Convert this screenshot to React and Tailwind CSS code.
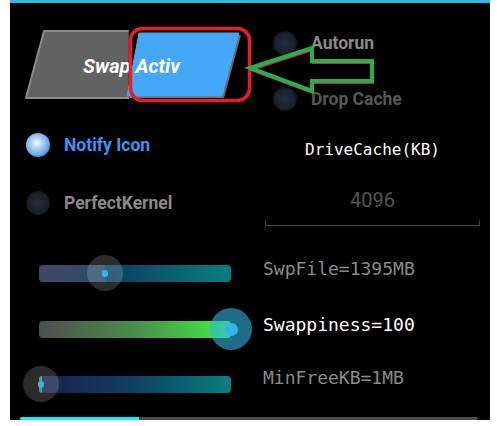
import React from "react";

const sans = "font-['Roboto',sans-serif]";
const mono = "font-['DejaVu_Sans_Mono',monospace]";

function Radio({ on, label, dim }) {
  return (
    <div className="flex items-center gap-[14px] h-6">
      {on ? (
        <div className="w-6 h-6 rounded-full bg-[radial-gradient(circle_at_45%_42%,#ffffff_0%,#b4d8fa_25%,#6aaaf0_60%,#2c5d9a_88%,#000_100%)]" />
      ) : (
        <div className="w-6 h-6 rounded-full bg-[radial-gradient(circle,#222b3a_0%,#1a2230_55%,#0b0e14_85%,#000_100%)]" />
      )}
      <span
        className={`${sans} font-bold text-[17.5px] leading-6 ${
          on ? "text-[#3a96f2]" : dim ? "text-[#575757]" : "text-[#8a8a8a]"
        }`}
      >
        {label}
      </span>
    </div>
  );
}

function SwapToggle() {
  return (
    <svg width="240" height="80" viewBox="10 24 240 80" className="mt-[21px]">
      <defs>
        <clipPath id="leftHalf">
          <rect x="0" y="0" width="129" height="120" />
        </clipPath>
      </defs>
      <polygon
        points="44,31 152,31 134,98 26,98"
        fill="#626262"
        stroke="#8a8a8a"
        strokeWidth="2"
        strokeLinejoin="round"
        clipPath="url(#leftHalf)"
      />
      <polygon points="141,35 241,35 224,98 129,98" fill="#6b6b6b" strokeLinejoin="round" />
      <polygon
        points="139,33 239,33 222,96 127,96"
        fill="#45a7f7"
        stroke="#45a7f7"
        strokeWidth="1"
        strokeLinejoin="round"
      />
      <line x1="129.5" y1="31" x2="129.5" y2="86" stroke="#000" strokeWidth="1.5" />
      <text
        x="83"
        y="73"
        fill="#fff"
        fontFamily="Roboto, sans-serif"
        fontWeight="700"
        fontStyle="italic"
        fontSize="20"
      >
        Swap Activ
      </text>
    </svg>
  );
}

function Slider({ track, pos, big, label, labelColor, height, lift, fill }) {
  return (
    <div className={`flex items-center ${height}`}>
      <div className={`relative ml-[29px] w-[192px] h-[17px] rounded-[4px] ${track}`}>
        {fill}
        <div
          className={`absolute top-1/2 -translate-x-1/2 -translate-y-1/2 rounded-full flex items-center justify-center ${
            big ? "w-[42px] h-[42px] bg-[#33b5e5]/60" : "w-9 h-9 bg-white/[0.17]"
          }`}
          style={{ left: pos }}
        >
          <div
            className={`rounded-full bg-[#35b5e5] ${big ? "w-[13px] h-[13px]" : "w-[6px] h-[7px]"}`}
          />
        </div>
      </div>
      <span className={`${mono} ml-[32px] text-[18px] leading-6 ${lift} ${labelColor}`}>{label}</span>
    </div>
  );
}

export default function App() {
  return (
    <div className="relative w-[497px] h-[426px] bg-white overflow-hidden">
      <div className="ml-[10px] w-[480px] h-[420px] bg-black flex flex-col">
        <div className="h-[3px] bg-[#33b5e5]" />

        <div className="grid grid-cols-[250px_230px] h-[242px]">
          <div className="flex flex-col">
            <SwapToggle />
            <div className="mt-[29px] pl-[16px]">
              <Radio on label="Notify Icon" />
            </div>
            <div className="mt-[34px] pl-[16px]">
              <Radio label="PerfectKernel" />
            </div>
          </div>

          <div className="flex flex-col">
            <div className="mt-[28px] pl-[13px]">
              <Radio label="Autorun" />
            </div>
            <div className="mt-[32px] pl-[13px]">
              <Radio label="Drop Cache" dim />
            </div>
            <div className="ml-[5px] w-[215px] flex flex-col items-center">
              <div className={`${mono} mt-[29px] text-[16px] leading-[20px] text-white`}>
                DriveCache(KB)
              </div>
              <div className={`${sans} mt-[28px] text-[20px] leading-6 text-[#555]`}>4096</div>
              <div className="mt-[8px] w-full h-[6px] border-x border-b border-[#444]" />
            </div>
          </div>
        </div>

        <Slider
          height="h-[56px]"
          track="bg-[linear-gradient(to_right,#38385a,#0e3f64_40%,#087f80)]"
          fill={<div className="absolute left-0 top-0 h-full w-[66px] rounded-l-[4px] bg-white/[0.07]" />}
          pos="66px"
          lift="mb-[8px]"
          label="SwpFile=1395MB"
          labelColor="text-[#8a8a8a]"
        />
        <Slider
          height="h-[56px]"
          track="bg-[linear-gradient(to_right,#4e4e4e,#4a8d4a_50%,#40f040)]"
          pos="192px"
          big
          lift="mb-[8px]"
          label="Swappiness=100"
          labelColor="text-white"
        />
        <Slider
          height="h-[54px]"
          track="bg-[linear-gradient(to_right,#1a1f50,#0e4066_50%,#087f80)]"
          fill={<div className="absolute left-0 top-0 h-full w-[3px] rounded-l-[4px] bg-[#3a8a3a]" />}
          pos="2px"
          lift="mb-[12px]"
          label="MinFreeKB=1MB"
          labelColor="text-[#8a8a8a]"
        />

        <div className="mt-[6px] ml-[10px] w-[458px] h-[3px] flex">
          <div className="w-[119px] bg-[#00f6ff] rounded-l-[2px]" />
          <div className="flex-1 bg-[#4a4a4a] rounded-r-[2px]" />
        </div>
      </div>

      <svg className="absolute inset-0 pointer-events-none" width="497" height="426">
        <rect x="130.5" y="28.5" width="119" height="72" rx="12" fill="none" stroke="#ec1c24" strokeWidth="3.5" />
        <path
          d="M251,70 L313,50 L313,63 L373,63 L373,83 L313,83 L313,93 Z"
          fill="none"
          stroke="#ec1c24"
          strokeWidth="2"
          strokeLinejoin="miter"
        />
        <path
          d="M250,68 L312,48 L312,61 L372,61 L372,81 L312,81 L312,91 Z"
          fill="none"
          stroke="#22b14c"
          strokeWidth="4"
          strokeLinejoin="miter"
        />
      </svg>
    </div>
  );
}
